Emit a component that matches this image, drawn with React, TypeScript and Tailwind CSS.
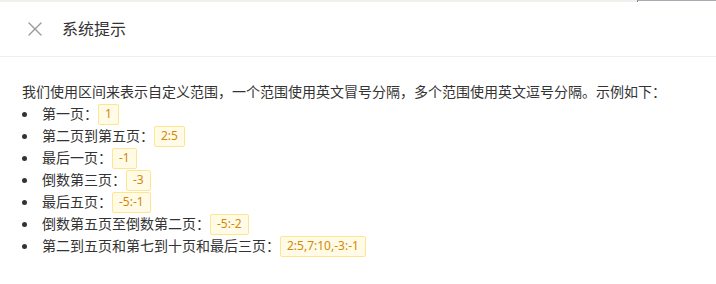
const items: { label: string; code: string }[] = [
  { label: '第一页：', code: '1' },
  { label: '第二页到第五页：', code: '2:5' },
  { label: '最后一页：', code: '-1' },
  { label: '倒数第三页：', code: '-3' },
  { label: '最后五页：', code: '-5:-1' },
  { label: '倒数第五页至倒数第二页：', code: '-5:-2' },
  { label: '第二到五页和第七到十页和最后三页：', code: '2:5,7:10,-3:-1' },
];

function CloseIcon() {
  return (
    <svg width="14" height="14" viewBox="0 0 14 14" className="shrink-0">
      <path d="M1 1 L13 13 M13 1 L1 13" stroke="#9a9a9a" strokeWidth="1.4" strokeLinecap="round" />
    </svg>
  );
}

export default function App() {
  return (
    <div
      className="w-[716px] h-[284px] bg-white text-[#333] overflow-hidden"
      style={{ fontFamily: '"Noto Sans", "Noto Sans CJK SC", sans-serif' }}
    >
      {/* top strip of the page behind the dialog */}
      <div className="flex h-[2px]">
        <div className="flex-1 bg-[#edf3eb]" />
        <div className="w-[79px] border-t border-[#a9a9b3] border-l border-l-[#808080]" />
      </div>

      <div className="flex items-center h-[55px] border-b border-[#efefef] pl-[28px]">
        <CloseIcon />
        <span className="ml-[20px] text-[16px] text-[#333]">系统提示</span>
      </div>

      <div className="pl-[22px] pt-[24px] text-[14px] leading-[22px]">
        <p>我们使用区间来表示自定义范围，一个范围使用英文冒号分隔，多个范围使用英文逗号分隔。示例如下：</p>
        <ul>
          {items.map((it) => (
            <li key={it.code} className="flex items-center h-[22px]">
              <span className="w-[5px] h-[5px] rounded-full bg-[#333] mr-[15px]" />
              <span>{it.label}</span>
              <span className="h-[21px] px-[6px] flex items-center border border-[#ffe58f] bg-[#fffbe6] text-[#d48806] text-[12px] rounded-[2px]">
                {it.code}
              </span>
            </li>
          ))}
        </ul>
      </div>
    </div>
  );
}
